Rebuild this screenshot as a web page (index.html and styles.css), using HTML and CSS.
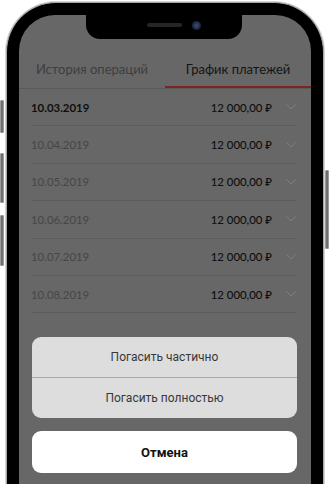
FILE: index.html
```html
<!DOCTYPE html>
<html lang="ru">
<head>
<meta charset="utf-8">
<title>График платежей</title>
<link rel="stylesheet" href="styles.css">
</head>
<body>
<div class="phone">
  <span class="btn btn-l1"></span>
  <span class="btn btn-l2"></span>
  <span class="btn btn-l3"></span>
  <span class="btn btn-r1"></span>
  <div class="screen">
    <div class="notch">
      <span class="speaker"></span>
      <span class="camera"></span>
    </div>
    <div class="tabs">
      <div class="tab">История операций</div>
      <div class="tab active">График платежей</div>
    </div>
    <div class="list">
      <div class="row current"><span class="date">10.03.2019</span><span class="amount">12 000,00 ₽</span><svg class="chev" viewBox="0 0 10 6"><path d="M0.5 0.5 L5 5 L9.5 0.5"/></svg></div>
      <div class="row"><span class="date">10.04.2019</span><span class="amount">12 000,00 ₽</span><svg class="chev" viewBox="0 0 10 6"><path d="M0.5 0.5 L5 5 L9.5 0.5"/></svg></div>
      <div class="row"><span class="date">10.05.2019</span><span class="amount">12 000,00 ₽</span><svg class="chev" viewBox="0 0 10 6"><path d="M0.5 0.5 L5 5 L9.5 0.5"/></svg></div>
      <div class="row"><span class="date">10.06.2019</span><span class="amount">12 000,00 ₽</span><svg class="chev" viewBox="0 0 10 6"><path d="M0.5 0.5 L5 5 L9.5 0.5"/></svg></div>
      <div class="row"><span class="date">10.07.2019</span><span class="amount">12 000,00 ₽</span><svg class="chev" viewBox="0 0 10 6"><path d="M0.5 0.5 L5 5 L9.5 0.5"/></svg></div>
      <div class="row"><span class="date">10.08.2019</span><span class="amount">12 000,00 ₽</span><svg class="chev" viewBox="0 0 10 6"><path d="M0.5 0.5 L5 5 L9.5 0.5"/></svg></div>
    </div>
    <div class="sheet">
      <div class="group">
        <div class="action">Погасить частично</div>
        <div class="action">Погасить полностью</div>
      </div>
      <div class="cancel">Отмена</div>
    </div>
  </div>
</div>
</body>
</html>
```

FILE: styles.css
```css
html, body {
  margin: 0;
  padding: 0;
  background: #ffffff;
  height: 484px;
  overflow: hidden;
}

.phone {
  position: relative;
  margin: 2px 0 0 6px;
  width: 318px;
  height: 482px;
  box-sizing: border-box;
  padding: 12px 12px 0 12px;
  background: #000;
  border: 1px solid #a8a8a8;
  border-bottom: 0;
  border-radius: 50px 50px 0 0;
  box-shadow: 0 0 0 1px #d4d4d4;
}

.btn {
  position: absolute;
  width: 4px;
  background: #6f6f6f;
  border: 1px solid #9a9a9a;
  box-sizing: border-box;
  border-radius: 1px;
}
.btn-l1 { left: -7px; top: 97px; height: 33px; }
.btn-l2 { left: -7px; top: 150px; height: 50px; }
.btn-l3 { left: -7px; top: 212px; height: 51px; }
.btn-r1 { right: -6px; top: 167px; height: 79px; }

.screen {
  position: relative;
  height: 100%;
  background: #676767;
  border-radius: 36px 36px 0 0;
  overflow: hidden;
  font-family: Lato, "Noto Sans", sans-serif;
}

.notch {
  position: absolute;
  top: 0;
  left: 67px;
  width: 156px;
  height: 24px;
  background: #000;
  border-radius: 0 0 14px 14px;
}
.speaker {
  position: absolute;
  left: 61px;
  top: 8px;
  width: 35px;
  height: 4px;
  border-radius: 2px;
  background: #262626;
}
.camera {
  position: absolute;
  left: 106px;
  top: 6px;
  width: 9px;
  height: 9px;
  border-radius: 50%;
  background: radial-gradient(circle at 50% 50%, #3d4f78 0, #1f2a45 55%, #0c1020 100%);
}

.tabs {
  display: flex;
  height: 73px;
  border-bottom: 1px solid #5a5a5a;
}
.tab {
  flex: 1;
  display: flex;
  align-items: flex-end;
  justify-content: center;
  padding-bottom: 11px;
  box-sizing: border-box;
  font-size: 13px;
  line-height: 16px;
  color: #3e3e3e;
}
.tab.active {
  color: #141414;
  box-shadow: inset 0 -2px 0 #7c2424;
}

.list {
  padding: 0 15px 0 12px;
}
.row {
  display: flex;
  align-items: center;
  height: 37.4px;
  box-sizing: border-box;
  border-bottom: 1px solid #5c5c5c;
  font-size: 11.4px;
}
.date {
  color: #464646;
}
.row.current .date {
  color: #0e0e0e;
  font-weight: 700;
}
.amount {
  margin-left: auto;
  color: #0f0f0f;
  font-weight: 500;
}
.chev {
  width: 10px;
  height: 6px;
  margin-left: 14px;
  fill: none;
  stroke: #808080;
  stroke-width: 1;
}

.sheet {
  position: absolute;
  left: 13px;
  right: 14px;
  top: 322px;
  display: flex;
  flex-direction: column;
  gap: 13px;
  font-family: Roboto, "Noto Sans", sans-serif;
}
.group {
  background: #dddddd;
  border-radius: 9px;
  overflow: hidden;
}
.action {
  height: 40px;
  display: flex;
  align-items: center;
  justify-content: center;
  font-size: 12px;
  color: #383838;
}
.action + .action {
  border-top: 1px solid #a9a9a9;
}
.cancel {
  height: 42px;
  background: #fff;
  border-radius: 9px;
  display: flex;
  align-items: center;
  justify-content: center;
  font-size: 13px;
  font-weight: 700;
  color: #111;
}
```
